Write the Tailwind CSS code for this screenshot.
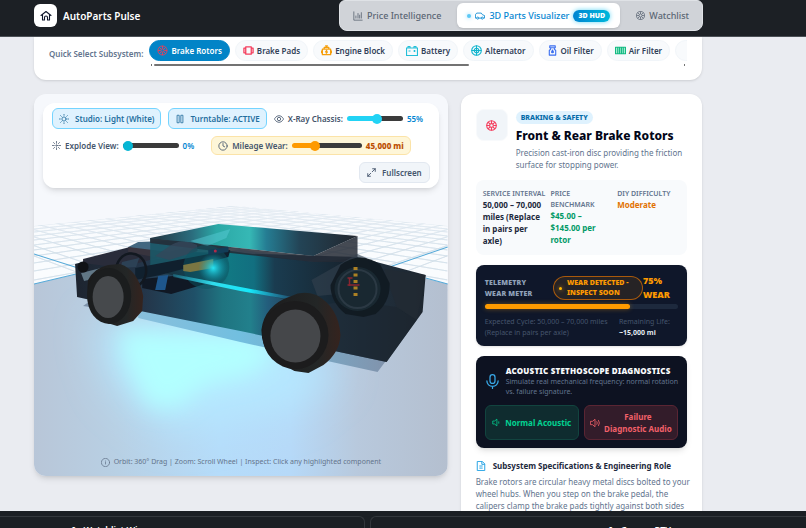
<!DOCTYPE html>
<html lang="en">
<head>
    <meta charset="UTF-8">
    <meta name="viewport" content="width=device-width, initial-scale=1.0">
    <title>AutoParts Pulse</title>
    <script src="https://cdn.jsdelivr.net/npm/@tailwindcss/browser@4"></script>
</head>
<body class="h-screen overflow-hidden flex flex-col bg-[#eaecf1] font-['Noto_Sans',sans-serif] text-[8px] leading-[12px] text-slate-600">

    <!-- Header -->
    <header class="shrink-0 h-[37px] bg-[#1c2025] border-b border-[#4b5056] pl-[34px] pr-[103px] flex justify-between items-start">
        <a href="#" class="flex items-center gap-[6px] mt-1 text-white text-[10px] font-semibold">
            <span class="w-[23px] h-[23px] rounded-md bg-white text-slate-900 flex items-center justify-center">
                <svg class="w-[12px] h-[12px]" viewBox="0 0 24 24" fill="none" stroke="currentColor" stroke-width="2.2" stroke-linecap="round" stroke-linejoin="round"><path d="M2 11 12 3l10 8M5 9v11h4v-5a3 3 0 0 1 6 0v5h4V9"/></svg>
            </span>
            AutoParts Pulse
        </a>
        <nav class="h-[31px] rounded-b-lg rounded-t-md bg-[#d0d3d8] border border-[#dfe2e6] px-[3px] flex items-center justify-between w-[364px] text-[9px] font-medium text-[#5b6674]">
            <a href="#" class="flex items-center gap-1 pl-[10px]">
                <svg class="w-[10px] h-[10px]" viewBox="0 0 24 24" fill="none" stroke="currentColor" stroke-width="2" stroke-linecap="round"><path d="M2 2v20h20M7 17v-5M12 17V6M16 17v-7M20 17V4"/></svg>
                Price Intelligence
            </a>
            <a href="#" class="h-[25px] flex items-center gap-1 px-[10px] rounded-md bg-white text-sky-600 shadow">
                <span class="w-1 h-1 rounded-full bg-[#5cc8f5] shadow-[0_0_4px_#7dd3fc]"></span>
                <svg class="w-[10px] h-[10px]" viewBox="0 0 24 24" fill="none" stroke="currentColor" stroke-width="2" stroke-linejoin="round"><path d="M4 17H1V9l3-4h11l3 4 5 2v6h-3M9 17h6"/><circle cx="6.500" cy="17" r="2.500"/><circle cx="17.500" cy="17" r="2.500"/></svg>
                3D Parts Visualizer
                <span class="px-[5px] h-[12px] flex items-center rounded-full bg-linear-to-r from-sky-600 to-cyan-500 text-white text-[7px] font-black shadow-[0_0_5px_#67d6f5]">3D HUD</span>
            </a>
            <a href="#" class="flex items-center gap-1 pr-[10px]">
                <svg class="w-[9px] h-[9px]" viewBox="0 0 24 24" fill="none" stroke="currentColor" stroke-width="2"><circle cx="12" cy="12" r="11"/><circle cx="12" cy="12" r="4"/><path d="M12 1v7M12 16v7M1 12h7M16 12h7M4 4l5 5M15 15l5 5M20 4l-5 5M9 15l-5 5"/></svg>
                Watchlist
            </a>
        </nav>
    </header>

    <main class="flex-1 min-h-0 overflow-hidden pl-[34px] pr-[104px]">

        <!-- Quick select -->
        <section class="bg-white rounded-b-xl shadow-sm h-[43px] px-[15px] pt-[3px] flex gap-[6px]">
            <h2 class="shrink-0 pt-[8px] font-semibold text-slate-500">Quick Select Subsystem:</h2>
            <div class="flex-1 min-w-0">
                <div class="flex gap-[5px] overflow-hidden font-semibold text-slate-700">
                    <button class="shrink-0 h-[21px] px-[7px] flex items-center gap-[3px] rounded-full bg-[#0284c7] border border-[#0284c7] text-white">
                        <svg class="w-[11px] h-[11px]" viewBox="0 0 24 24" fill="none" stroke="#e8405c" stroke-width="2"><circle cx="12" cy="12" r="10"/><circle cx="12" cy="12" r="3.500"/><path d="M12 2v6M12 16v6M2 12h6M16 12h6M5 5l4 4M15 15l4 4M19 5l-4 4M9 15l-4 4"/></svg>
                        Brake Rotors
                    </button>
                    <button class="shrink-0 h-[21px] px-[7px] flex items-center gap-[3px] rounded-full bg-slate-50 border border-slate-100">
                        <svg class="w-[11px] h-[11px]" viewBox="0 0 24 24" fill="none" stroke="#f43f5e" stroke-width="2.800" stroke-linejoin="round"><path d="M6 4h12v3h4v10h-4v3H6v-3H2V7h4zM6 7v10M18 7v10"/></svg>
                        Brake Pads
                    </button>
                    <button class="shrink-0 h-[21px] px-[7px] flex items-center gap-[3px] rounded-full bg-slate-50 border border-slate-100">
                        <svg class="w-[11px] h-[11px]" viewBox="0 0 24 24" fill="none" stroke="#f59e0b" stroke-width="2.800" stroke-linejoin="round"><path d="M3 9h18v12H3zM7 9V5h10v4M12 5V2M9 2h6M1 12v6M23 12v6M13 11l-3 4h4l-3 4"/></svg>
                        Engine Block
                    </button>
                    <button class="shrink-0 h-[21px] px-[7px] flex items-center gap-[3px] rounded-full bg-slate-50 border border-slate-100">
                        <svg class="w-[12px] h-[12px]" viewBox="0 0 24 24" fill="none" stroke="#22bfd8" stroke-width="2.400" stroke-linejoin="round"><path d="M1 6h22v15H1zM4 6V3h4v3M16 6V3h4v3M5 12h4M15 12h4M17 10v4"/></svg>
                        Battery
                    </button>
                    <button class="shrink-0 h-[21px] px-[7px] flex items-center gap-[3px] rounded-full bg-slate-50 border border-slate-100">
                        <svg class="w-[11px] h-[11px]" viewBox="0 0 24 24" fill="none" stroke="#12b5ce" stroke-width="2.400"><circle cx="12" cy="12" r="10.500"/><circle cx="12" cy="12" r="5"/><path d="M12 1v22M1 12h22"/></svg>
                        Alternator
                    </button>
                    <button class="shrink-0 h-[21px] px-[7px] flex items-center gap-[3px] rounded-full bg-slate-50 border border-slate-100">
                        <svg class="w-[11px] h-[11px]" viewBox="0 0 24 24" fill="none" stroke="#3b6ff0" stroke-width="2.400" stroke-linejoin="round"><path d="M6 2h12v4H6zM8 6v3l-3 3v10h14V12l-3-3V6"/><path d="M12 11l-2 4a2 2 0 1 0 4 0z" fill="#3b6ff0"/></svg>
                        Oil Filter
                    </button>
                    <button class="shrink-0 h-[21px] px-[7px] flex items-center gap-[3px] rounded-full bg-slate-50 border border-slate-100">
                        <svg class="w-[11px] h-[11px]" viewBox="0 0 24 24" fill="#a7ecd0" stroke="#10b981" stroke-width="2.400" stroke-linejoin="round"><path d="M1 5h22v14H1zM6 5v14M10 5v14M14 5v14M18 5v14"/></svg>
                        Air Filter
                    </button>
                    <button class="shrink-0 h-[21px] w-[70px] rounded-full bg-slate-50 border border-slate-100" aria-label="More"></button>
                </div>
                <div class="mt-[3px] flex items-center gap-[2px] px-[2px]">
                    <span class="w-px h-[2px] bg-neutral-500"></span>
                    <span class="w-[59%] h-[2px] rounded bg-neutral-500"></span>
                    <span class="ml-auto w-px h-[2px] bg-neutral-500"></span>
                </div>
            </div>
        </section>

        <div class="mt-[14px] grid grid-cols-[minmax(0,12fr)_minmax(0,7fr)] gap-[13px] items-start">

            <!-- 3D viewer -->
            <section class="relative h-[382px] rounded-xl overflow-hidden bg-[#f6f8fc] shadow-md">
                <svg class="absolute inset-0 w-full h-full" viewBox="34 94 413 382" preserveAspectRatio="none" aria-hidden="true">
                    <defs>
                        <linearGradient id="floor" x1="34" x2="447" y1="0" y2="0" gradientUnits="userSpaceOnUse">
                            <stop offset="0" stop-color="#b8c6d8"/><stop offset=".2" stop-color="#b8d0e4"/><stop offset=".45" stop-color="#b5dcfa"/><stop offset=".62" stop-color="#b6d9f8"/><stop offset=".78" stop-color="#b8c9dd"/><stop offset="1" stop-color="#b4bfcf"/>
                        </linearGradient>
                        <linearGradient id="body" x1="75" x2="425" y1="0" y2="0" gradientUnits="userSpaceOnUse">
                            <stop offset="0" stop-color="#1d242f"/><stop offset=".2" stop-color="#24364a"/><stop offset=".34" stop-color="#1f5068"/><stop offset=".42" stop-color="#1f7480"/><stop offset=".5" stop-color="#22808c"/><stop offset=".55" stop-color="#235d7c"/><stop offset=".64" stop-color="#243d52"/><stop offset="1" stop-color="#1e262f"/>
                        </linearGradient>
                        <linearGradient id="roof" x1="150" x2="357" y1="0" y2="0" gradientUnits="userSpaceOnUse">
                            <stop offset="0" stop-color="#22333f"/><stop offset=".2" stop-color="#2b6c7d"/><stop offset=".32" stop-color="#2ba8a6"/><stop offset=".48" stop-color="#36b8b5"/><stop offset=".56" stop-color="#257d93"/><stop offset=".72" stop-color="#234456"/><stop offset="1" stop-color="#22262e"/>
                        </linearGradient>
                        <linearGradient id="side" x1="150" x2="357" y1="0" y2="0" gradientUnits="userSpaceOnUse">
                            <stop offset="0" stop-color="#1b2733"/><stop offset=".2" stop-color="#144252"/><stop offset=".38" stop-color="#117883"/><stop offset=".5" stop-color="#126f80"/><stop offset=".6" stop-color="#1a3c50"/><stop offset="1" stop-color="#17202a"/>
                        </linearGradient>
                        <linearGradient id="beam" x1="170" x2="292" y1="0" y2="0" gradientUnits="userSpaceOnUse">
                            <stop offset="0" stop-color="#26a9c4" stop-opacity=".3"/><stop offset=".35" stop-color="#31dcec"/><stop offset=".65" stop-color="#16e8fa"/><stop offset="1" stop-color="#2676a8" stop-opacity=".4"/>
                        </linearGradient>
                        <linearGradient id="shade" x1="140" x2="386" y1="0" y2="0" gradientUnits="userSpaceOnUse">
                            <stop offset="0" stop-color="#88bfdc"/><stop offset=".4" stop-color="#72bfe0"/><stop offset="1" stop-color="#8193ac"/>
                        </linearGradient>
                        <linearGradient id="tread" x1="0" x2="1"><stop offset="0" stop-color="#1b1b1c"/><stop offset=".7" stop-color="#232626"/><stop offset="1" stop-color="#35231e"/></linearGradient>
                        <radialGradient id="glow"><stop offset="0" stop-color="#27e3f3"/><stop offset="1" stop-color="#119db1" stop-opacity="0"/></radialGradient>
                        <linearGradient id="fade" x1="0" x2="0" y1="0" y2="1"><stop offset="0" stop-color="#f6f8fc" stop-opacity=".6"/><stop offset="1" stop-color="#f6f8fc" stop-opacity="0"/></linearGradient>
                        <clipPath id="far"><path d="M34 226 235 206 447 226V300H34z"/></clipPath>
                        <filter id="blur" x="-50%" y="-50%" width="200%" height="200%"><feGaussianBlur stdDeviation="20"/></filter>
                        <filter id="soft" x="-50%" y="-50%" width="200%" height="200%"><feGaussianBlur stdDeviation="11"/></filter>
                    </defs>

                    <!-- floor grid up to the horizon -->
                    <g clip-path="url(#far)">
                        <path d="M34 226 235 206 447 226V300H34z" fill="#fafcfe"/>
                        <path d="M34 226 700 160 34 229 700 160 34 232 700 160 34 236 700 160 34 240 700 160 34 245 700 160 34 250 700 160 34 256 700 160 34 263 700 160 34 271 700 160 34 280 700 160 34 290 700 160 34 301 700 160 34 313 700 160 34 327 700 160 34 343 700 160 34 362 700 160 34 385 700 160 34 412 700 160" stroke="#d3e0ea" stroke-width=".7" fill="none"/>
                        <path d="M447 226-220 160 447 229-220 160 447 232-220 160 447 236-220 160 447 240-220 160 447 245-220 160 447 250-220 160 447 256-220 160 447 263-220 160 447 271-220 160 447 280-220 160 447 290-220 160 447 301-220 160 447 313-220 160 447 327-220 160 447 343-220 160 447 362-220 160 447 385-220 160 447 412-220 160" stroke="#d3e0ea" stroke-width=".7" fill="none"/>
                        <path d="M34 226 235 206 447 226V250H34z" fill="url(#fade)"/>
                    </g>
                    <path d="M34 284 77 274 240 250 383 268 447 284V476H34z" fill="url(#floor)"/>
                    <path d="M34 254 78 268M34 284 76 274M447 247 383 269M447 284 425 278" stroke="#55a9d8" fill="none"/>

                    <!-- light pool -->
                    <path d="M95 325 250 330 340 370 290 410 170 430 115 385z" fill="#b5e8ff" filter="url(#blur)"/>
                    <path d="M120 330 250 335 280 352 250 375 205 385 175 408 148 405 125 360z" fill="#b2ffff" filter="url(#soft)"/>

                    <!-- chassis slab and its cast shadow -->
                    <path d="M138 308 386 360 377 372 240 342 138 318z" fill="url(#shade)"/>
                    <path d="M83 306 90 301V307z" fill="#7d92aa"/>
                    <path d="M75 264 128 250 357 257 425 275 422 312 386 362 240 331 140 311 77 297z" fill="url(#body)"/>
                    <path d="M313 296 396 307 416 320 386 362 320 348z" fill="#1c242e" opacity=".55"/>
                    <path d="M396 307 416 320 425 275 383 269z" fill="#222a33" opacity=".8"/>

                    <!-- cab -->
                    <path d="M83 259 130 247 175 253 120 268 83 263z" fill="#292c3a"/>
                    <path d="M128 247 138 242 190 240 200 247 168 256z" fill="#426780"/>
                    <path d="M128 247 169 252 197 245V251L169 260 128 252z" fill="#38343e"/>
                    <path d="M150 260 230 251 313 262 357 258V300L313 306 240 289 171 275 150 268z" fill="url(#side)"/>
                    <path d="M150 238V267L228 250V236z" fill="#1b5867" opacity=".9"/>
                    <path d="M150 238 218 224 357 236 313 256 230 247z" fill="url(#roof)"/>
                    <path d="M150 238 230 247 313 256 357 236V262L313 262 230 253 150 243z" fill="#242a35" opacity=".85"/>
                    <path d="M168 247Q180 237 197 245V251L169 260 155 256z" fill="#34475a" opacity=".8"/>
                    <path d="M190 241 230 229 226 238 207 246z" fill="#55c9d4" opacity=".5"/>
                    <path d="M135 268 230 250 228 257 160 275 135 280z" fill="#10202e"/>
                    <path d="M142 279 173 276 205 284 171 294 142 288z" fill="#101824"/>
                    <path d="M158 276 168 275 165 290 155 290z" fill="#1e568c"/>
                    <path d="M81 273 101 268V277L84 281z" fill="#617786"/>
                    <ellipse cx="206" cy="267" rx="23" ry="22" fill="#0b5462" opacity=".5"/>
                    <path d="M183 265 213 259V268L190 272 183 271z" fill="#7b7642"/>
                    <circle cx="213" cy="268" r="15" fill="url(#glow)"/>
                    <path d="M208 250 228 247V252L208 255z" fill="#123d57"/>
                    <circle cx="215" cy="251" r="1.500" fill="#b02b48"/>
                    <path d="M173 274 240 287 292 297V300L240 291 173 277z" fill="url(#beam)"/>

                    <!-- rear axle -->
                    <path d="M311 280 357 254 366 258 380 290 317 296z" fill="#33414e" opacity=".6"/>
                    <path d="M340 265Q360 250 380 265L389 283Q390 302 375 314L363 317 345 314Q330 302 330 285z" fill="#111a22" opacity=".95"/>
                    <ellipse cx="357" cy="289" rx="23" ry="22" fill="#1b2a33" opacity=".9"/>
                    <ellipse cx="357" cy="289" rx="19" ry="19" fill="none" stroke="#2b3944" stroke-width="2"/>
                    <path d="M355 267V298" stroke="#c79022" stroke-width="4" stroke-dasharray="3 3.500" fill="none" opacity=".85"/>
                    <path d="M347 278H352M347 285H359M349 278V286" stroke="#8b2530" stroke-width="1.500" fill="none"/>

                    <!-- wheels -->
                    <path d="M116 270A15 17 0 1 1 137 286" stroke="#121820" stroke-width="2.500" fill="none"/>
                    <path d="M122 262 139 258 136 267 120 268z" fill="#2c4155"/>
                    <circle cx="83" cy="267" r="5.500" fill="#101216"/>
                    <path d="M108 265 120 264Q138 270 143 296L142 311 133 321 117 326 104 322 90 306Q86 294 88 280 94 268 108 265z" fill="url(#tread)"/>
                    <ellipse cx="109" cy="296" rx="22" ry="28" fill="#1b1d1e"/>
                    <ellipse cx="108" cy="297" rx="15.500" ry="21" fill="#46494c"/>
                    <path d="M291 296Q302 290 316 295 338 307 340 335 339 353 323 365L308 373 294 371 272 359Q261 346 261 330 264 305 291 296z" fill="url(#tread)"/>
                    <ellipse cx="295" cy="335" rx="33" ry="34" fill="#1c1c1d"/>
                    <ellipse cx="295" cy="336" rx="25" ry="26.500" fill="#45474a"/>
                </svg>

                <!-- Toolbar -->
                <div class="relative m-[9px] px-[9px] py-[5px] rounded-xl bg-white/95 shadow-md flex flex-col gap-[7px] font-semibold whitespace-nowrap">
                    <div class="flex items-center gap-[7px]">
                        <button class="h-[21px] px-[6px] flex items-center gap-[6px] rounded-md bg-sky-100 border border-sky-300 text-[#246f9e]">
                            <svg class="w-[10px] h-[10px]" viewBox="0 0 24 24" fill="none" stroke="currentColor" stroke-width="2" stroke-linecap="round"><circle cx="12" cy="12" r="5"/><path d="M12 1v2M12 21v2M1 12h2M21 12h2M4 4l1.500 1.500M18.500 18.500 20 20M20 4l-1.500 1.500M5.500 18.500 4 20"/></svg>
                            Studio: Light (White)
                        </button>
                        <button class="h-[21px] px-[6px] flex items-center gap-[5px] rounded-md bg-sky-100 border border-sky-300 text-[#246f9e]">
                            <svg class="w-[10px] h-[10px]" viewBox="0 0 24 24" fill="none" stroke="currentColor" stroke-width="2"><path d="M5 3h5v18H5zM14 3h5v18h-5z"/></svg>
                            Turntable: ACTIVE
                        </button>
                        <div class="flex items-center gap-1">
                            <svg class="w-[10px] h-[10px]" viewBox="0 0 24 24" fill="none" stroke="currentColor" stroke-width="2"><path d="M1 12s4-8 11-8 11 8 11 8-4 8-11 8S1 12 1 12z"/><circle cx="12" cy="12" r="4"/></svg>
                            <label for="xray">X-Ray Chassis:</label>
                            <input id="xray" type="range" value="55" class="appearance-none w-[56px] h-[5px] rounded-full bg-linear-to-r from-[#22d3f5] from-55% to-[#3b3b3b] to-55% [&::-webkit-slider-thumb]:appearance-none [&::-webkit-slider-thumb]:w-[10px] [&::-webkit-slider-thumb]:h-[10px] [&::-webkit-slider-thumb]:rounded-full [&::-webkit-slider-thumb]:bg-[#22d3f5]">
                            <output for="xray" class="text-sky-600">55%</output>
                        </div>
                    </div>
                    <div class="flex items-center gap-[17px]">
                        <div class="flex items-center gap-[4px]">
                            <svg class="w-[9px] h-[9px]" viewBox="0 0 24 24" fill="none" stroke="currentColor" stroke-width="2" stroke-linecap="round"><circle cx="12" cy="12" r="2"/><path d="M12 1v5M12 18v5M1 12h5M18 12h5M4 4l3 3M17 17l3 3M20 4l-3 3M7 17l-3 3"/></svg>
                            <label for="explode">Explode View:</label>
                            <input id="explode" type="range" value="0" class="appearance-none w-[56px] h-[5px] rounded-full bg-[#3b3b3b] [&::-webkit-slider-thumb]:appearance-none [&::-webkit-slider-thumb]:w-[10px] [&::-webkit-slider-thumb]:h-[10px] [&::-webkit-slider-thumb]:rounded-full [&::-webkit-slider-thumb]:bg-[#06b6d4]">
                            <output for="explode" class="text-sky-600">0%</output>
                        </div>
                        <div class="h-[19px] px-[6px] flex items-center gap-[4px] rounded-md bg-[#fef6d8] border border-[#fbe3a8]">
                            <svg class="w-[10px] h-[10px]" viewBox="0 0 24 24" fill="none" stroke="currentColor" stroke-width="2" stroke-linecap="round"><circle cx="12" cy="12" r="10"/><path d="M12 6v6l4 2"/></svg>
                            <label for="mileage">Mileage Wear:</label>
                            <input id="mileage" type="range" min="0" max="150000" value="45000" class="appearance-none w-[70px] h-[5px] rounded-full bg-linear-to-r from-amber-500 from-30% to-[#3b3b3b] to-30% [&::-webkit-slider-thumb]:appearance-none [&::-webkit-slider-thumb]:w-[10px] [&::-webkit-slider-thumb]:h-[10px] [&::-webkit-slider-thumb]:rounded-full [&::-webkit-slider-thumb]:bg-amber-500">
                            <output for="mileage" class="font-extrabold text-amber-700">45,000 mi</output>
                        </div>
                    </div>
                    <button class="self-end h-[21px] px-[7px] flex items-center gap-[6px] rounded-md bg-slate-100 border border-slate-200">
                        <svg class="w-[9px] h-[9px]" viewBox="0 0 24 24" fill="none" stroke="currentColor" stroke-width="2.400" stroke-linecap="round" stroke-linejoin="round"><path d="M15 2h7v7M22 2l-8 8M9 22H2v-7M2 22l8-8"/></svg>
                        Fullscreen
                    </button>
                </div>
                <p class="absolute inset-x-0 bottom-2 flex items-center justify-center gap-1 text-[7px] text-[#64748b]">
                    <svg class="w-[9px] h-[9px]" viewBox="0 0 24 24" fill="none" stroke="currentColor" stroke-width="2" stroke-linecap="round"><circle cx="12" cy="12" r="11"/><path d="M12 11v5M12 8v.1"/></svg>
                    Orbit: 360° Drag | Zoom: Scroll Wheel | Inspect: Click any highlighted component
                </p>
            </section>

            <!-- Part details -->
            <aside class="bg-white rounded-xl shadow-sm p-[15px] min-h-[450px]">
                <div class="flex gap-[8px]">
                    <span class="shrink-0 w-[32px] h-[32px] rounded-lg bg-slate-100 border border-slate-50 flex items-center justify-center">
                        <svg class="w-[11px] h-[11px]" viewBox="0 0 24 24" fill="none" stroke="#f43f5e" stroke-width="2.400"><circle cx="12" cy="12" r="10.500"/><circle cx="12" cy="12" r="4"/><path d="M12 1v7M12 16v7M1 12h7M16 12h7M4.500 4.500 9 9M15 15l4.500 4.500M19.500 4.500 15 9M9 15l-4.500 4.500"/></svg>
                    </span>
                    <div>
                        <span class="inline-flex items-center h-[13px] mt-[2px] px-[5px] rounded-full bg-sky-100 text-[7px] font-extrabold text-sky-700">BRAKING &amp; SAFETY</span>
                        <h1 class="mt-[3px] text-[12px] leading-[17px] font-extrabold text-slate-950 whitespace-nowrap">Front &amp; Rear Brake Rotors</h1>
                        <p class="mt-[3px] text-slate-500">Precision cast-iron disc providing the friction surface for stopping power.</p>
                    </div>
                </div>

                <dl class="mt-[9px] h-[75px] rounded-lg bg-slate-50 px-[7px] pt-[8px] grid grid-cols-3 font-bold">
                    <div>
                        <dt class="text-[7px] leading-[11px] font-semibold text-slate-500 whitespace-nowrap">SERVICE INTERVAL</dt>
                        <dd class="text-slate-800">50,000 – 70,000 miles (Replace in pairs per axle)</dd>
                    </div>
                    <div class="pl-[2px] pr-[10px]">
                        <dt class="text-[7px] leading-[11px] font-semibold text-slate-500">PRICE BENCHMARK</dt>
                        <dd class="text-emerald-600">$45.00 – $145.00 per rotor</dd>
                    </div>
                    <div class="pl-[3px]">
                        <dt class="text-[7px] leading-[11px] font-semibold text-slate-500">DIY DIFFICULTY</dt>
                        <dd class="text-amber-600">Moderate</dd>
                    </div>
                </dl>

                <div class="mt-[10px] h-[81px] rounded-lg bg-[#0f172a] px-[9px] pt-[9px] shadow">
                    <div class="flex items-center justify-between font-extrabold">
                        <h3 class="w-[60px] text-[7px] leading-[11px] font-black tracking-wide text-slate-400">TELEMETRY WEAR METER</h3>
                        <div class="flex items-center">
                            <span class="w-[90px] h-[24px] px-[5px] flex items-center gap-[5px] rounded-full bg-amber-500/10 border border-amber-600/70 text-[7px] leading-[10px] font-black text-amber-500">
                                <span class="shrink-0 w-[3px] h-[3px] rounded-full bg-amber-400 shadow-[0_0_4px_#f59e0b]"></span>
                                WEAR DETECTED - INSPECT SOON
                            </span>
                            <span class="w-[35px] text-[9px] leading-[14px] font-black text-amber-500">75% WEAR</span>
                        </div>
                    </div>
                    <div class="mt-[2px] h-[5px] rounded-full bg-slate-800">
                        <div class="w-3/4 h-full rounded-full bg-amber-500 shadow-[0_0_5px_#f59e0b66]"></div>
                    </div>
                    <div class="mt-[7px] flex justify-between text-[7px] leading-[11px] text-slate-600">
                        <p class="w-[126px]">Expected Cycle: 50,000 – 70,000 miles (Replace in pairs per axle)</p>
                        <p class="w-[59px]">Remaining Life: <b class="block text-slate-200">~15,000 mi</b></p>
                    </div>
                </div>

                <div class="mt-[10px] h-[92px] rounded-lg bg-[#0d1221] px-[9px] pt-[9px] shadow-md">
                    <div class="flex items-center gap-[6px] -mr-[6px]">
                        <svg class="shrink-0 w-[15px] h-[15px]" viewBox="0 0 24 24" fill="none" stroke="#38a9e8" stroke-width="2" stroke-linecap="round"><rect x="8" y="1" width="8" height="14" rx="4"/><path d="M3 11a9 9 0 0 0 18 0M12 20v3"/></svg>
                        <div>
                            <h3 class="font-black tracking-wide text-slate-50 leading-[12px] whitespace-nowrap">ACOUSTIC STETHOSCOPE DIAGNOSTICS</h3>
                            <p class="text-[7px] leading-[10px] text-slate-500">Simulate real mechanical frequency: normal rotation vs. failure signature.</p>
                        </div>
                    </div>
                    <div class="mt-[8px] grid grid-cols-2 gap-[5px] font-bold">
                        <button class="h-[35px] flex items-center justify-center gap-1 rounded-md bg-[#0f2c2f] border border-[#12443f] text-emerald-400">
                            <svg class="w-[9px] h-[9px]" viewBox="0 0 24 24" fill="none" stroke="currentColor" stroke-width="2" stroke-linejoin="round"><path d="M2 8h5l6-5v18l-6-5H2zM18 9v6"/></svg>
                            Normal Acoustic
                        </button>
                        <button class="h-[35px] flex items-center justify-center gap-1 rounded-md bg-[#331c2a] border border-[#5a2533] text-[#f26069]">
                            <svg class="shrink-0 w-[10px] h-[10px]" viewBox="0 0 24 24" fill="none" stroke="currentColor" stroke-width="2" stroke-linejoin="round"><path d="M1 8h5l6-5v18l-6-5H1zM16 8q3 4 0 8M20 5q5 7 0 14"/></svg>
                            <span class="whitespace-nowrap">Failure <br>Diagnostic Audio</span>
                        </button>
                    </div>
                </div>

                <h2 class="mt-[12px] flex items-center gap-[7px] font-bold text-slate-800">
                    <svg class="w-[10px] h-[10px]" viewBox="0 0 24 24" fill="none" stroke="#2aa5e5" stroke-width="2.400" stroke-linejoin="round"><path d="M3 1h12l6 6v16H3zM14 1v7h7M8 12h8M8 17h8"/></svg>
                    Subsystem Specifications &amp; Engineering Role
                </h2>
                <p class="mt-[4px] -mr-[10px] text-slate-500">Brake rotors are circular heavy metal discs bolted to your wheel hubs. When you step on the brake pedal, the calipers clamp the brake pads tightly against both sides</p>
            </aside>
        </div>
    </main>

    <!-- Bottom strip -->
    <footer class="shrink-0 h-[17px] overflow-hidden bg-[#1b1f24] pt-[5px] flex gap-[5px] text-[9px] font-semibold text-white">
        <div class="w-[365px] h-10 rounded-tr-md border-t border-r border-[#33373c] pl-[72px] pt-[7px]">In Watchlist Wins</div>
        <div class="flex-1 h-10 rounded-tl-md border-t border-l border-[#33373c] pl-[238px] pt-[7px]">In Garage RTV</div>
    </footer>
</body>
</html>
